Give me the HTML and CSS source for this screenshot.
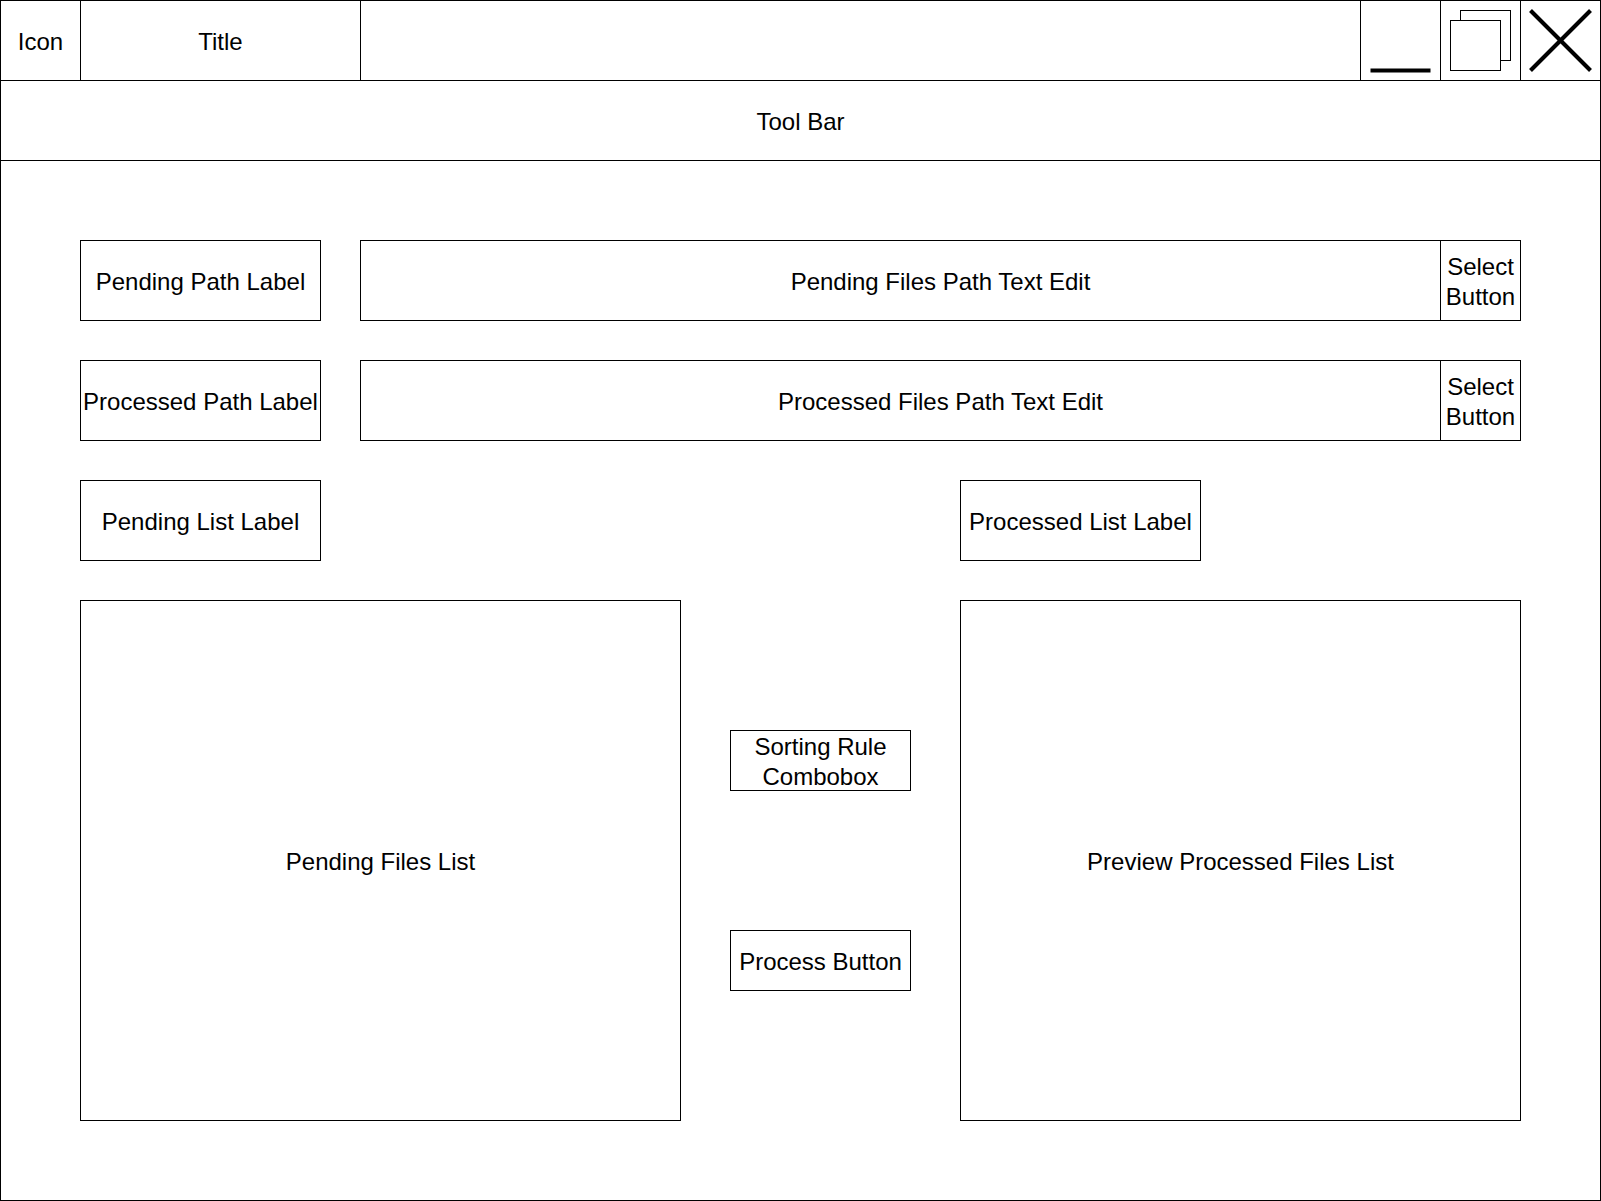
FILE: index.html
```html
<!DOCTYPE html>
<html lang="en">

<head>
    <meta charset="UTF-8">
    <meta name="viewport" content="width=device-width, initial-scale=1.0">
    <title>File Sorter</title>
    <link rel="stylesheet" href="styles.css">
</head>

<body>
    <div class="window">
        <div class="title-bar">
            <div class="cell cell-icon">Icon</div>
            <div class="cell cell-title">Title</div>
            <div class="cell cell-empty"></div>
            <div class="cell window-button">
                <svg width="79" height="79" viewBox="0 0 79 79">
                    <line x1="9.5" y1="69.5" x2="69.5" y2="69.5" stroke="#000" stroke-width="4" />
                </svg>
            </div>
            <div class="cell window-button">
                <svg width="79" height="79" viewBox="0 0 79 79">
                    <rect x="19.5" y="9.5" width="50" height="50" fill="#fff" stroke="#000" />
                    <rect x="9.5" y="19.5" width="50" height="50" fill="#fff" stroke="#000" />
                </svg>
            </div>
            <div class="cell close-button">
                <svg width="79" height="79" viewBox="0 0 79 79">
                    <line x1="9.5" y1="9.5" x2="69.5" y2="69.5" stroke="#000" stroke-width="4" />
                    <line x1="69.5" y1="9.5" x2="9.5" y2="69.5" stroke="#000" stroke-width="4" />
                </svg>
            </div>
        </div>
        <div class="tool-bar">Tool Bar</div>
        <div class="content">
            <div class="row">
                <div class="box label">Pending Path Label</div>
                <div class="box path-field">Pending Files Path Text Edit</div>
                <div class="box select-button">Select Button</div>
            </div>
            <div class="row">
                <div class="box label">Processed Path Label</div>
                <div class="box path-field">Processed Files Path Text Edit</div>
                <div class="box select-button">Select Button</div>
            </div>
            <div class="lists">
                <div class="box label">Pending List Label</div>
                <div class="box label processed-label">Processed List Label</div>
                <div class="box">Pending Files List</div>
                <div class="actions">
                    <div class="box action">Sorting Rule Combobox</div>
                    <div class="box action">Process Button</div>
                </div>
                <div class="box">Preview Processed Files List</div>
            </div>
        </div>
    </div>
</body>

</html>
```

FILE: styles.css
```css
body {
    margin: 0;
    font-family: "Liberation Sans", Arial, sans-serif;
    font-size: 24px;
    color: #000;
    background-color: #fff;
}

.window {
    display: flex;
    flex-direction: column;
    width: 1601px;
    height: 1201px;
    border: 1px solid #000;
    box-sizing: border-box;
}

.title-bar {
    display: flex;
    height: 80px;
    border-bottom: 1px solid #000;
    box-sizing: border-box;
}

.cell {
    display: flex;
    align-items: center;
    justify-content: center;
    padding-top: 2px;
    border-right: 1px solid #000;
    box-sizing: border-box;
}

.cell-icon {
    width: 80px;
}

.cell-title {
    width: 280px;
}

.cell-empty {
    flex: 1;
}

.window-button {
    width: 80px;
    padding-top: 0;
}

.close-button {
    width: 79px;
    padding-top: 0;
    border-right: none;
}

.cell svg {
    display: block;
}

.tool-bar {
    display: flex;
    align-items: center;
    justify-content: center;
    height: 80px;
    padding-top: 2px;
    border-bottom: 1px solid #000;
    box-sizing: border-box;
}

.content {
    flex: 1;
    display: flex;
    flex-direction: column;
    gap: 39px;
    padding: 79px 0 0 79px;
}

.box {
    display: flex;
    align-items: center;
    justify-content: center;
    text-align: center;
    line-height: 30px;
    padding-top: 2px;
    border: 1px solid #000;
    box-sizing: border-box;
}

.row {
    display: flex;
    height: 81px;
}

.label {
    width: 241px;
}

.row .label {
    margin-right: 39px;
}

/* the text edit runs under the select button */
.path-field {
    width: 1161px;
}

.select-button {
    width: 81px;
    margin-left: -81px;
    background-color: #fff;
}

.lists {
    display: grid;
    grid-template-columns: 601px 279px 561px;
    grid-template-rows: 81px 521px;
    row-gap: 39px;
}

.processed-label {
    grid-column: 3;
}

.actions {
    display: flex;
    flex-direction: column;
    align-items: center;
    justify-content: center;
    gap: 139px;
}

.action {
    width: 181px;
    height: 61px;
}
```
